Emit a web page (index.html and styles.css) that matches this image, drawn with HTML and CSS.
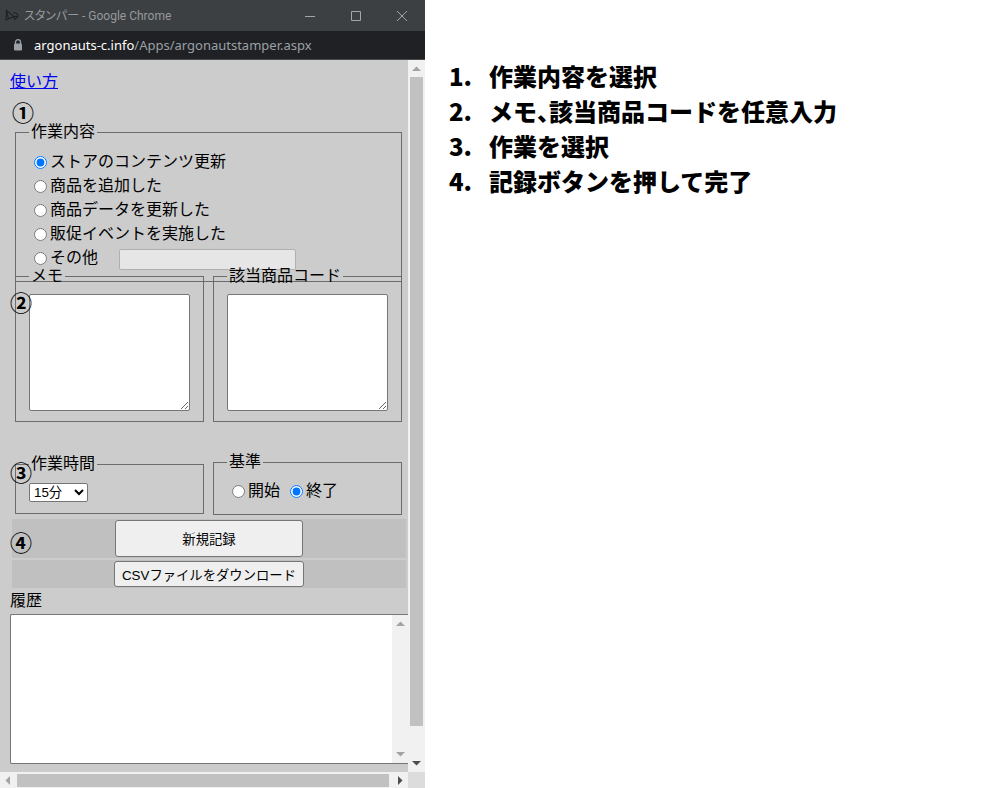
FILE: index.html
```html
<!DOCTYPE html>
<html lang="ja">
<head>
<meta charset="utf-8">
<title>スタンパー</title>
<link rel="stylesheet" href="styles.css">
</head>
<body>
<div class="layout">
  <section class="window">
    <header class="titlebar">
      <svg class="app-icon" width="14" height="14" viewBox="0 0 14 14" fill="none" stroke="#202224" stroke-width="1.1"><path d="M1.500 1.500L9 7.500L1 11zM1.500 1.500L3.500 10M8.500 3.500c3 .5 4.500 2.500 4.500 4L9.500 10.500L9 7.500L13 7.500"/></svg>
      <span class="window-title">スタンパー - Google Chrome</span>
      <div class="window-controls">
        <button type="button" aria-label="最小化"><svg width="12" height="12" viewBox="0 0 12 12"><path d="M1 6.500h10"/></svg></button>
        <button type="button" aria-label="最大化"><svg width="12" height="12" viewBox="0 0 12 12"><path d="M1.500 1.500h9v9h-9z"/></svg></button>
        <button type="button" aria-label="閉じる"><svg width="12" height="12" viewBox="0 0 12 12"><path d="M1 1l10 10M11 1L1 11"/></svg></button>
      </div>
    </header>
    <div class="addressbar">
      <svg class="lock" width="10" height="12" viewBox="0 0 10 12"><path d="M2.500 5V3.200a2.500 2.500 0 0 1 5 0V5" fill="none" stroke="#9aa0a6" stroke-width="1.300"/><rect x="1" y="4.500" width="8" height="7" rx="1" fill="#9aa0a6"/></svg>
      <span class="url"><b>argonauts-c.info</b>/Apps/argonautstamper.aspx</span>
    </div>
    <div class="viewport">
      <main class="page">
        <a class="help" href="#usage">使い方</a>
        <form class="form">
          <fieldset class="box tasks">
            <legend>作業内容</legend>
            <label class="choice"><input type="radio" name="task" checked>ストアのコンテンツ更新</label>
            <label class="choice"><input type="radio" name="task">商品を追加した</label>
            <label class="choice"><input type="radio" name="task">商品データを更新した</label>
            <label class="choice"><input type="radio" name="task">販促イベントを実施した</label>
            <div class="other">
              <label class="choice"><input type="radio" name="task">その他</label>
              <input class="other-text" type="text" aria-label="その他の内容" disabled>
            </div>
          </fieldset>
          <div class="pair notes">
            <fieldset class="box">
              <legend>メモ</legend>
              <textarea class="note" aria-label="メモ"></textarea>
            </fieldset>
            <fieldset class="box">
              <legend>該当商品コード</legend>
              <textarea class="note" aria-label="該当商品コード"></textarea>
            </fieldset>
          </div>
          <div class="pair timing">
            <fieldset class="box duration">
              <legend>作業時間</legend>
              <select aria-label="作業時間"><option>15分</option><option>30分</option><option>60分</option></select>
            </fieldset>
            <fieldset class="box basis">
              <legend>基準</legend>
              <div class="basis-row">
                <label class="choice"><input type="radio" name="basis">開始</label>
                <label class="choice"><input type="radio" name="basis" checked>終了</label>
              </div>
            </fieldset>
          </div>
        </form>
        <div class="actions">
          <div class="action"><button type="button" class="record">新規記録</button></div>
          <div class="action"><button type="button" class="download">CSVファイルをダウンロード</button></div>
        </div>
        <label class="history-label" for="history">履歴</label>
        <div class="history">
          <textarea id="history" readonly></textarea>
          <div class="bar bar-v">
            <svg class="arrow off" width="16" height="17" viewBox="0 0 16 17"><path d="M4 11h9L8.500 6.500z"/></svg>
            <svg class="arrow off" width="16" height="17" viewBox="0 0 16 17"><path d="M4 6h9L8.500 10.500z"/></svg>
          </div>
        </div>
        <span class="marker marker-1">①</span>
        <span class="marker marker-2">②</span>
        <span class="marker marker-3">③</span>
        <span class="marker marker-4">④</span>
      </main>
      <div class="bar bar-v">
        <svg class="arrow off" width="17" height="17" viewBox="0 0 17 17"><path d="M4 11h9L8.500 6.500z"/></svg>
        <div class="track"><div class="thumb thumb-v"></div></div>
        <svg class="arrow" width="17" height="17" viewBox="0 0 17 17"><path d="M4 6h9L8.500 10.500z"/></svg>
      </div>
      <div class="bar bar-h">
        <svg class="arrow off" width="17" height="16" viewBox="0 0 17 16"><path d="M10 4v9L5.500 8.500z"/></svg>
        <div class="track"><div class="thumb thumb-h"></div></div>
        <svg class="arrow" width="17" height="16" viewBox="0 0 17 16"><path d="M7 4v9l4.500-4.500z"/></svg>
      </div>
      <div class="corner"></div>
    </div>
  </section>
  <aside class="steps">
    <div class="step"><span class="num">1.</span><span>作業内容を選択</span></div>
    <div class="step"><span class="num">2.</span><span>メモ<span class="comma">、</span>該当商品コードを任意入力</span></div>
    <div class="step"><span class="num">3.</span><span>作業を選択</span></div>
    <div class="step"><span class="num">4.</span><span>記録ボタンを押して完了</span></div>
  </aside>
</div>
</body>
</html>
```

FILE: styles.css
```css
* { box-sizing: border-box; }

body {
  margin: 0;
  background: #fff;
  color: #000;
  font: 16px/24px "Liberation Sans", "Noto Sans CJK JP", sans-serif;
}

button, input, select, textarea { font-family: inherit; }

.layout {
  display: grid;
  grid-template-columns: 17fr 23fr;
  min-height: 100vh;
}

.window {
  display: flex;
  flex-direction: column;
  min-width: 0;
}

.titlebar {
  display: flex;
  align-items: center;
  height: 31px;
  padding-left: 5px;
  gap: 5px;
  background: #3c4043;
  color: #96999b;
  font: 12px/16px Roboto, "Noto Sans CJK JP", sans-serif;
  font-feature-settings: "palt";
}

.window-title { flex: 1; white-space: nowrap; }
.window-controls { display: flex; }

.window-controls button {
  display: grid;
  place-items: center;
  width: 46px;
  height: 31px;
  padding: 0;
  border: 0;
  background: none;
}

.window-controls svg { fill: none; stroke: #a3a6a8; }

.addressbar {
  display: flex;
  align-items: center;
  height: 29px;
  padding-left: 13px;
  gap: 11px;
  background: #202124;
  border-bottom: 1px solid #4a4b4d;
  color: #9aa0a6;
  font: 13px/18px "Noto Sans", sans-serif;
}

.url b { color: #fff; font-weight: 400; }

.viewport {
  flex: 1;
  display: grid;
  grid-template-columns: minmax(0, 1fr) 17px;
  grid-template-rows: 1fr 16px;
}

.page {
  position: relative;
  overflow: hidden;
  padding: 10px 0 8px;
  background: #ccc;
}

.help {
  display: block;
  width: fit-content;
  margin-left: 10px;
  color: #00e;
}

.form { padding: 26px 6px 0 15px; }

.box {
  min-width: 0;
  margin: 0;
  border: 1px solid #6c6c6c;
}

.box legend { padding: 0 2px; }

.tasks { padding: 6px 18px 11px 13px; }
.tasks .choice { margin-left: 5px; }

.choice {
  display: flex;
  align-items: center;
  gap: 3px;
}

.choice input { margin: 0; }

.other { display: flex; gap: 21px; height: 24px; }

.other-text {
  width: 177px;
  height: 21px;
  margin-top: 3px;
  border: 1px solid #b0b0b0;
  border-radius: 2px;
  background: #e6e6e6;
}

.pair {
  display: grid;
  grid-template-columns: 1fr 1fr;
  gap: 9px;
}

.notes { margin-top: -18px; }
.notes .box { padding: 6px 13px 10px; }

.note {
  display: block;
  width: 100%;
  height: 117px;
  border: 1px solid #767676;
  border-radius: 2px;
  background: #fff;
}

.timing { margin-top: 28px; align-items: start; }
.duration { margin-top: 2px; padding: 7px 13px 11px; }

.duration select {
  display: block;
  width: 59px;
  height: 19px;
  padding: 0;
  border: 1px solid #767676;
  border-radius: 2px;
  background: #fff;
  color: #000;
}

.basis { padding: 5px 13px 11px; }
.basis-row { display: flex; gap: 10px; padding-left: 5px; }

.actions {
  display: grid;
  gap: 2px;
  margin: 4px 2px 1px 12px;
}

.action {
  display: flex;
  justify-content: center;
  padding: 1px;
  background: #c0c0c0;
}

.action button {
  border: 1px solid #767676;
  border-radius: 3px;
  background: #efefef;
  color: #000;
}

.record { width: 188px; height: 37px; }
.download { width: 190px; height: 26px; padding: 0; }

.history-label { display: block; margin: 0 0 1px 10px; }

.history {
  display: flex;
  height: 150px;
  margin-left: 10px;
  border: 1px solid #767676;
  border-right: 0;
  border-radius: 2px 0 0 2px;
  background: #fff;
}

.history textarea {
  flex: 1;
  min-width: 0;
  border: 0;
  background: transparent;
  resize: none;
}

.marker {
  position: absolute;
  left: 10px;
  font-family: "Noto Sans CJK JP", sans-serif;
  font-size: 22px;
  font-weight: 700;
  line-height: 24px;
}

.marker-1 { top: 39px; left: 12px; }
.marker-2 { top: 229px; }
.marker-3 { top: 399px; }
.marker-4 { top: 469px; }

.bar { display: flex; background: #f1f1f1; }
.bar-v { flex-direction: column; justify-content: space-between; }
.track { flex: 1; display: flex; }
.bar-v .track { flex-direction: column; padding: 0 2px; }
.bar-h .track { padding: 2px 0 1px; }
.thumb { background: #c1c1c1; }
.thumb-v { flex: 0 0 95.7%; }
.thumb-h { flex: 0 0 99.5%; }
.arrow { display: block; fill: #4d4d4d; }
.arrow.off { fill: #a3a3a3; }
.corner { background: #dcdcdc; }

.steps {
  padding: 58px 24px;
  font-family: "Noto Sans CJK JP", sans-serif;
  font-size: 24px;
  font-weight: 900;
  line-height: 35px;
}

.step { display: flex; }
.num { flex: 0 0 40px; }
.comma { font-feature-settings: "halt"; }
```
